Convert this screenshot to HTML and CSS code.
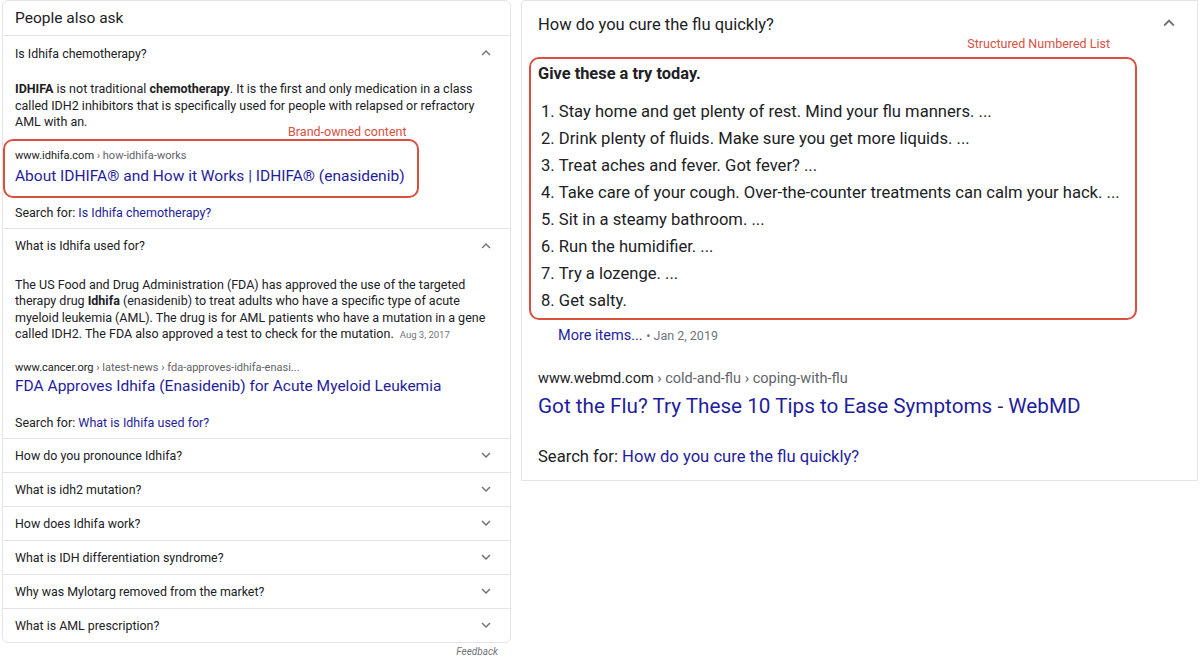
FILE: index.html
```html
<!DOCTYPE html>
<html lang="en">
<head>
  <meta charset="UTF-8" />
  <meta name="viewport" content="width=device-width, initial-scale=1" />
  <title>People also ask</title>
  <link rel="stylesheet" href="styles.css">
</head>
<body>

<div class="page">

  <!-- Kiri: People also ask -->
  <div class="left">
    <div class="paa">
      <div class="paa-title">People also ask</div>

      <div class="qa">
        <div class="q-row">
          <span>Is Idhifa chemotherapy?</span>
          <svg class="chev" viewBox="0 0 24 24"><path d="M7.41 15.41L12 10.83l4.59 4.58L18 14l-6-6-6 6z"/></svg>
        </div>
        <div class="answer">
          <p><b>IDHIFA</b> is not traditional <b>chemotherapy</b>. It is the first and only medication in a class called IDH2 inhibitors that is specifically used for people with relapsed or refractory AML with an.</p>
          <div class="source marked">
            <span class="note">Brand-owned content</span>
            <div class="cite">www.idhifa.com <span>› how-idhifa-works</span></div>
            <a class="title" href="#">About IDHIFA® and How it Works | IDHIFA® (enasidenib)</a>
          </div>
          <div class="search-for">Search for: <a href="#">Is Idhifa chemotherapy?</a></div>
        </div>
      </div>

      <div class="qa long">
        <div class="q-row">
          <span>What is Idhifa used for?</span>
          <svg class="chev" viewBox="0 0 24 24"><path d="M7.41 15.41L12 10.83l4.59 4.58L18 14l-6-6-6 6z"/></svg>
        </div>
        <div class="answer">
          <p>The US Food and Drug Administration (FDA) has approved the use of the targeted therapy drug <b>Idhifa</b> (enasidenib) to treat adults who have a specific type of acute myeloid leukemia (AML). The drug is for AML patients who have a mutation in a gene called IDH2. The FDA also approved a test to check for the mutation. <span class="date">Aug 3, 2017</span></p>
          <div class="source">
            <div class="cite">www.cancer.org <span>› latest-news › fda-approves-idhifa-enasi...</span></div>
            <a class="title" href="#">FDA Approves Idhifa (Enasidenib) for Acute Myeloid Leukemia</a>
          </div>
          <div class="search-for">Search for: <a href="#">What is Idhifa used for?</a></div>
        </div>
      </div>

      <div class="q-row closed"><span>How do you pronounce Idhifa?</span><svg class="chev" viewBox="0 0 24 24"><path d="M16.59 8.59L12 13.17 7.41 8.59 6 10l6 6 6-6z"/></svg></div>
      <div class="q-row closed"><span>What is idh2 mutation?</span><svg class="chev" viewBox="0 0 24 24"><path d="M16.59 8.59L12 13.17 7.41 8.59 6 10l6 6 6-6z"/></svg></div>
      <div class="q-row closed"><span>How does Idhifa work?</span><svg class="chev" viewBox="0 0 24 24"><path d="M16.59 8.59L12 13.17 7.41 8.59 6 10l6 6 6-6z"/></svg></div>
      <div class="q-row closed"><span>What is IDH differentiation syndrome?</span><svg class="chev" viewBox="0 0 24 24"><path d="M16.59 8.59L12 13.17 7.41 8.59 6 10l6 6 6-6z"/></svg></div>
      <div class="q-row closed"><span>Why was Mylotarg removed from the market?</span><svg class="chev" viewBox="0 0 24 24"><path d="M16.59 8.59L12 13.17 7.41 8.59 6 10l6 6 6-6z"/></svg></div>
      <div class="q-row closed"><span>What is AML prescription?</span><svg class="chev" viewBox="0 0 24 24"><path d="M16.59 8.59L12 13.17 7.41 8.59 6 10l6 6 6-6z"/></svg></div>
    </div>
    <div class="feedback">Feedback</div>
  </div>

  <!-- Kanan: jawaban daftar bernomor -->
  <div class="right">
    <div class="r-head">
      <span>How do you cure the flu quickly?</span>
      <svg class="chev big" viewBox="0 0 24 24"><path d="M7.41 15.41L12 10.83l4.59 4.58L18 14l-6-6-6 6z"/></svg>
    </div>
    <div class="r-body">
      <div class="list-box">
        <span class="note">Structured Numbered List</span>
        <div class="list-title">Give these a try today.</div>
        <ol>
          <li>Stay home and get plenty of rest. Mind your flu manners. ...</li>
          <li>Drink plenty of fluids. Make sure you get more liquids. ...</li>
          <li>Treat aches and fever. Got fever? ...</li>
          <li>Take care of your cough. Over-the-counter treatments can calm your hack. ...</li>
          <li>Sit in a steamy bathroom. ...</li>
          <li>Run the humidifier. ...</li>
          <li>Try a lozenge. ...</li>
          <li>Get salty.</li>
        </ol>
      </div>
      <div class="more"><a href="#">More items...</a> <span>• Jan 2, 2019</span></div>
      <div class="r-cite">www.webmd.com <span>› cold-and-flu › coping-with-flu</span></div>
      <a class="r-title" href="#">Got the Flu? Try These 10 Tips to Ease Symptoms - WebMD</a>
      <div class="r-search">Search for: <a href="#">How do you cure the flu quickly?</a></div>
    </div>
  </div>

</div>

</body>
</html>
```

FILE: styles.css
```css
:root {
  --text: #202124;
  --gray: #70757a;
  --line: #e3e4e6;
  --link: #1f1d9c;
  --mark: #d9503f;
}

body {
  margin: 0;
  background: #fff;
  color: var(--text);
  font-family: Roboto, 'Liberation Sans', Arial, sans-serif;
}

a {
  color: var(--link);
  text-decoration: none;
}

.page {
  display: flex;
  align-items: flex-start;
  gap: 10px;
  padding-left: 2px;
}

/* ---- kiri ---- */
.left {
  width: 509px;
  flex: none;
}

.paa {
  border: 1px solid var(--line);
  border-radius: 6px;
}

.paa-title {
  height: 34px;
  line-height: 34px;
  padding: 0 12px;
  font-size: 15.5px;
  border-bottom: 1px solid var(--line);
}

.q-row {
  display: flex;
  justify-content: space-between;
  align-items: center;
  height: 34px;
  padding: 0 12px;
  font-size: 12.4px;
}

.qa,
.q-row.closed {
  border-bottom: 1px solid var(--line);
}

.q-row.closed {
  height: 33px;
}

.q-row.closed:last-child {
  border-bottom: none;
}

.chev {
  width: 18px;
  height: 18px;
  fill: #70757a;
  margin-right: 3px;
}

.answer {
  padding: 11px 12px 7px;
}

.answer p {
  margin: 0;
  font-size: 12.5px;
  line-height: 16.5px;
}

.date {
  font-size: 9.5px;
  color: var(--gray);
  margin-left: 3px;
}

.source {
  position: relative;
  width: fit-content;
  margin: 8px 0 7px -12px;
  padding: 8px 12px 10px 10px;
  border: 2px solid transparent;
  border-radius: 10px;
}

.source.marked {
  border-color: var(--mark);
}

.qa.long .answer {
  padding-top: 14px;
}

.qa.long .source {
  margin-top: 7px;
}

.qa.long .cite {
  margin-bottom: 1px;
}

.note {
  position: absolute;
  bottom: calc(100% + 1px);
  right: 10px;
  font-size: 12.5px;
  color: var(--mark);
  line-height: 17px;
  white-space: nowrap;
}

.cite {
  font-size: 11px;
  line-height: 14px;
  margin-bottom: 3px;
}

.cite span {
  color: #5f6368;
}

.title {
  display: block;
  font-size: 15.5px;
  line-height: 20px;
}

.search-for {
  font-size: 12.5px;
  line-height: 16px;
}

.feedback {
  text-align: right;
  padding: 3px 13px 0 0;
  font-size: 10px;
  line-height: 12px;
  font-style: italic;
  color: var(--gray);
}

/* ---- kanan ---- */
.right {
  flex: 1;
  margin-right: 2px;
  border: 1px solid var(--line);
  border-top-left-radius: 4px;
  height: 479px;
}

.r-head {
  display: flex;
  justify-content: space-between;
  align-items: center;
  height: 46px;
  padding: 0 17px 0 16px;
  font-size: 16.5px;
}

.chev.big {
  width: 22px;
  height: 22px;
  margin: -2px 0 0;
}

.r-body {
  padding: 10px 16px 0;
}

.list-box {
  position: relative;
  width: 590px;
  margin-left: -9px;
  padding: 4px 7px 4px;
  border: 2px solid var(--mark);
  border-radius: 10px;
}

.list-box .note {
  right: 25px;
  bottom: calc(100% + 8px);
  font-size: 12.5px;
  line-height: 14px;
}

.list-title {
  font-size: 16.4px;
  font-weight: bold;
  line-height: 22px;
  margin-bottom: 13px;
}

.list-box ol {
  margin: 0;
  padding: 0 0 0 3px;
  list-style-position: inside;
}

.list-box li {
  font-size: 16.6px;
  line-height: 27px;
}

.more {
  padding-left: 20px;
  margin-top: 5px;
  font-size: 14.5px;
  line-height: 22px;
}

.more span {
  font-size: 12.5px;
  color: var(--gray);
}

.r-cite {
  margin-top: 22px;
  font-size: 14.5px;
  line-height: 20px;
}

.r-cite span {
  color: #5f6368;
}

.r-title {
  display: block;
  font-size: 20.7px;
  line-height: 34px;
}

.r-search {
  margin-top: 23px;
  font-size: 16.6px;
  line-height: 22px;
}
```
